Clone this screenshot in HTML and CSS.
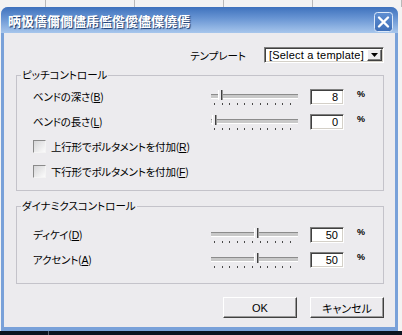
FILE: index.html
```html
<!DOCTYPE html>
<html lang="ja">
<head>
    <meta charset="UTF-8">
    <title>Note Expression</title>
    <link rel="stylesheet" href="styles.css">
</head>
<body>

    <div class="sheet"><span></span><span></span><span></span><span></span><span></span></div>

    <div class="dialog">
        <div class="titlebar">
            <span class="title">昞忣僐儞僩儘乕儖偺僾儘僷僥傿</span>
            <span class="close">
                <svg width="19" height="20" viewBox="0 0 19 20">
                    <defs>
                        <linearGradient id="cg" x1="0" y1="0" x2="0" y2="1">
                            <stop offset="0" stop-color="#5f8fd2"/>
                            <stop offset="1" stop-color="#3f6fb8"/>
                        </linearGradient>
                    </defs>
                    <rect x="0.5" y="0.5" width="18" height="19" rx="3" fill="url(#cg)" stroke="#dce8f8"/>
                    <path d="M5 5.5l9 9M14 5.5l-9 9" stroke="#fff" stroke-width="2.4" stroke-linecap="round"/>
                </svg>
            </span>
        </div>

        <div class="content">
            <div class="template-row">
                <span class="template-label">テンプレート</span>
                <div class="combo">
                    <span class="combo-text">[Select a template]</span>
                    <span class="combo-btn">
                        <svg width="7" height="4" viewBox="0 0 7 4"><path d="M0 0h7L3.5 4z" fill="#000"/></svg>
                    </span>
                </div>
            </div>

            <fieldset class="group">
                <legend>ピッチコントロール</legend>
                <div class="row">
                    <span class="label">ベンドの深さ(<u>B</u>)</span>
                    <div class="slider"><div class="rail"><span class="thumb" style="left: 8%"></span></div></div>
                    <span class="num">8</span>
                    <span class="pct">%</span>
                </div>
                <div class="row">
                    <span class="label">ベンドの長さ(<u>L</u>)</span>
                    <div class="slider"><div class="rail"><span class="thumb" style="left: 0%"></span></div></div>
                    <span class="num">0</span>
                    <span class="pct">%</span>
                </div>
                <div class="row">
                    <span class="check"></span>
                    <span class="label">上行形でポルタメントを付加(<u>R</u>)</span>
                </div>
                <div class="row">
                    <span class="check"></span>
                    <span class="label">下行形でポルタメントを付加(<u>F</u>)</span>
                </div>
            </fieldset>

            <fieldset class="group dynamics">
                <legend>ダイナミクスコントロール</legend>
                <div class="row">
                    <span class="label">ディケイ(<u>D</u>)</span>
                    <div class="slider"><div class="rail"><span class="thumb" style="left: 55%"></span></div></div>
                    <span class="num">50</span>
                    <span class="pct">%</span>
                </div>
                <div class="row">
                    <span class="label">アクセント(<u>A</u>)</span>
                    <div class="slider"><div class="rail"><span class="thumb" style="left: 55%"></span></div></div>
                    <span class="num">50</span>
                    <span class="pct">%</span>
                </div>
            </fieldset>

            <div class="buttons">
                <button class="btn">OK</button>
                <button class="btn">キャンセル</button>
            </div>
        </div>
    </div>

    <div class="taskbar"><span></span></div>

</body>
</html>
```

FILE: styles.css
```css
/* reset */
* {
    margin: 0;
    padding: 0;
    box-sizing: border-box;
}

body {
    width: 402px;
    height: 335px;
    overflow: hidden;
    background: #f3f3f3;
    font-family: "Noto Sans CJK JP", sans-serif;
    font-size: 10.5px;
    color: #000;
}

/* spreadsheet behind the dialog */
.sheet {
    display: flex;
    height: 7px;
}

.sheet span {
    width: 96px;
    border-right: 1px solid #b9b9b9;
}

.sheet span:first-child {
    width: 49px;
}

/* window frame */
.dialog {
    margin-left: 1px;
    width: 397px;
    height: 324px;
    display: flex;
    flex-direction: column;
    background: #79a1d9;
    border-radius: 7px 7px 0 0;
    padding-bottom: 4px;
}

.titlebar {
    height: 26px;
    display: flex;
    align-items: center;
    justify-content: space-between;
    padding: 0 5px 0 7px;
    border-radius: 7px 7px 0 0;
    background: linear-gradient(#3e72bd, #6a96d4 45%, #a7c6ec);
}

.title {
    font-family: "Noto Sans CJK SC", sans-serif;
    font-size: 13px;
    font-weight: bold;
    color: #fff;
    text-shadow: 1px 1px 1px #17376a;
    letter-spacing: 0;
}

.close {
    display: flex;
    margin-top: 4px;
}

.content {
    flex: 1;
    margin: 0 3px;
    background: #ecebee;
    padding: 14px 11px 0 12px;
    display: flex;
    flex-direction: column;
}

/* template selector */
.template-row {
    display: flex;
    justify-content: flex-end;
    align-items: center;
    height: 16px;
}

.template-label {
    margin-right: 18px;
    font-feature-settings: "palt";
}

.combo {
    width: 120px;
    height: 16px;
    display: flex;
    align-items: center;
    justify-content: space-between;
    background: #fff;
    border: 1px solid;
    border-color: #7f7f7f #fff #fff #7f7f7f;
    box-shadow: inset 1px 1px #404040, inset -1px -1px #d4d0c8;
    padding: 0 1px 0 4px;
}

.combo-text {
    font-family: "Liberation Sans", sans-serif;
    font-size: 11px;
    letter-spacing: 0.2px;
}

.combo-btn {
    width: 15px;
    height: 12px;
    display: flex;
    align-items: center;
    justify-content: center;
    background: #ecebee;
    border: 1px solid;
    border-color: #fff #404040 #404040 #fff;
    box-shadow: inset -1px -1px #808080;
}

/* group boxes */
.group {
    margin-top: 5px;
    border: 1px solid #c4c3ca;
    padding: 2px 16px 6px 16px;
}

.group legend {
    margin-left: -12px;
    padding: 0 1px;
    line-height: 14px;
    font-feature-settings: "palt";
}

.dynamics {
    margin-top: 8px;
    padding-top: 9px;
    padding-bottom: 11px;
}

.row {
    display: flex;
    align-items: center;
    height: 25px;
}

.label {
    flex: 1;
    font-feature-settings: "palt";
    letter-spacing: -0.2px;
}

.label u {
    font-family: "Liberation Sans", sans-serif;
}

/* trackbar */
.slider {
    position: relative;
    width: 90px;
    height: 25px;
    margin-right: 9px;
}

.slider::before {
    content: "";
    position: absolute;
    top: 10px;
    left: 0;
    right: 3px;
    height: 3px;
    border-top: 1px solid #8c8c8c;
    border-bottom: 1px solid #fff;
    background: #c8c8c8;
}

.rail {
    position: absolute;
    top: 0;
    left: 3px;
    width: 77px;
    height: 25px;
    background: repeating-linear-gradient(to right, #4a4a4a 0 1px, transparent 1px 7.6px) 0 19px / 78px 2px no-repeat;
}

.thumb {
    position: absolute;
    top: 6px;
    width: 4px;
    height: 10px;
    margin-left: -2px;
    background: #ecebee;
    border-left: 1px solid #fff;
    border-right: 1px solid #404040;
    box-shadow: 1px 0 #9a9a9a;
}

.num {
    width: 34px;
    height: 16px;
    background: #fff;
    border: 1px solid;
    border-color: #7f7f7f #fff #fff #7f7f7f;
    box-shadow: inset 1px 1px #404040, inset -1px -1px #d4d0c8;
    text-align: right;
    padding-right: 5px;
    font-family: "Liberation Sans", sans-serif;
    font-size: 11px;
    line-height: 14px;
}

.pct {
    width: 10px;
    margin-left: 13px;
    align-self: flex-start;
    margin-top: 5px;
    font-family: "Liberation Sans", sans-serif;
    font-size: 9px;
    font-weight: bold;
    line-height: 10px;
}

.check {
    width: 13px;
    height: 13px;
    margin-right: 5px;
    border: 1px solid;
    border-color: #8a8a8a #f4f4f4 #f4f4f4 #8a8a8a;
    background: linear-gradient(135deg, #d6d6d8, #fbfbfb);
}

/* OK / cancel */
.buttons {
    display: flex;
    justify-content: flex-end;
    gap: 13px;
    margin-top: 13px;
}

.btn {
    width: 74px;
    height: 21px;
    background: #ecebee;
    border: 1px solid;
    border-color: #fff #404040 #404040 #fff;
    box-shadow: inset -1px -1px #9a9a9a;
    font-family: "Liberation Sans", "Noto Sans CJK JP", sans-serif;
    font-size: 11px;
    color: #000;
}

.btn:last-child {
    font-family: "Noto Sans CJK JP", sans-serif;
    font-feature-settings: "palt";
}

.taskbar {
    height: 4px;
    background: #0c1320;
    display: flex;
}

.taskbar span {
    width: 49px;
    border-right: 1px solid #5a6270;
}
```
